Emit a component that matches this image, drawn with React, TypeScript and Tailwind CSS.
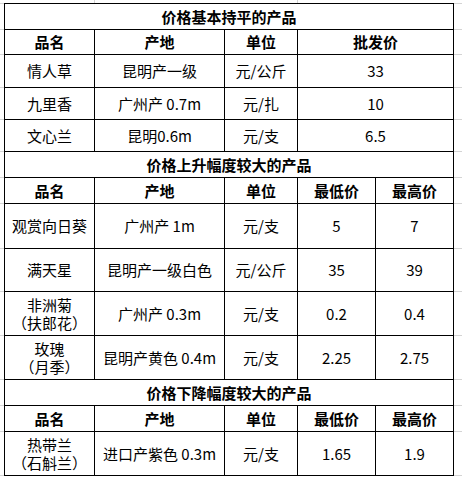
import React from "react";

const LINES = [3, 29, 54, 87, 119, 151, 177, 203, 248, 291, 335, 379, 405, 431, 475];

function Strip({ width }: { width: string }) {
  const segs: number[] = [];
  for (let i = 0; i < LINES.length; i++) {
    const next = i + 1 < LINES.length ? LINES[i + 1] : 479;
    segs.push(next - LINES[i]);
  }
  return (
    <div className={`flex flex-col shrink-0 ${width}`}>
      <div className="h-[3px] shrink-0" />
      {segs.map((h, i) => (
        <div key={i} className="border-t border-[#d4d4d4] shrink-0" style={{ height: h }} />
      ))}
    </div>
  );
}

const C = "bg-white flex items-center justify-center text-center";
const H = "bg-white flex items-center justify-center text-center font-bold";
const T = "bg-white flex items-center justify-center text-center font-bold col-span-5";

export default function App() {
  return (
    <div
      className="w-[462px] h-[479px] overflow-hidden bg-white text-black text-[15px] leading-[18px] flex flex-col"
      style={{ fontFamily: '"Noto Sans CJK SC", "Noto Sans", sans-serif' }}
    >
      <div className="flex flex-1">
        <Strip width="w-[4px]" />
        <div className="flex flex-col shrink-0">
          <div className="h-[3px] flex shrink-0">
            <div className="w-[91px] border-r border-[#d4d4d4]" />
            <div className="w-[203px] border-r border-[#d4d4d4]" />
          </div>
          <div className="grid bg-black p-px gap-px w-[450px] grid-cols-[89px_129px_72px_77px_77px] grid-rows-[25px_24px_32px_31px_31px_25px_25px_44px_42px_43px_43px_25px_25px_43px]">
            <div className={T}>价格基本持平的产品</div>
            <div className={H}>品名</div>
            <div className={H}>产地</div>
            <div className={H}>单位</div>
            <div className={`${H} col-span-2`}>批发价</div>

            <div className={C}>情人草</div>
            <div className={C}>昆明产一级</div>
            <div className={C}>元/公斤</div>
            <div className={`${C} col-span-2`}>33</div>

            <div className={C}>九里香</div>
            <div className={C}>广州产 0.7m</div>
            <div className={C}>元/扎</div>
            <div className={`${C} col-span-2`}>10</div>

            <div className={C}>文心兰</div>
            <div className={C}>昆明0.6m</div>
            <div className={C}>元/支</div>
            <div className={`${C} col-span-2`}>6.5</div>

            <div className={T}>价格上升幅度较大的产品</div>
            <div className={H}>品名</div>
            <div className={H}>产地</div>
            <div className={H}>单位</div>
            <div className={H}>最低价</div>
            <div className={H}>最高价</div>

            <div className={C}>观赏向日葵</div>
            <div className={C}>广州产 1m</div>
            <div className={C}>元/支</div>
            <div className={C}>5</div>
            <div className={C}>7</div>

            <div className={C}>满天星</div>
            <div className={C}>昆明产一级白色</div>
            <div className={C}>元/公斤</div>
            <div className={C}>35</div>
            <div className={C}>39</div>

            <div className={C}>
              非洲菊
              <br />
              （扶郎花）
            </div>
            <div className={C}>广州产 0.3m</div>
            <div className={C}>元/支</div>
            <div className={C}>0.2</div>
            <div className={C}>0.4</div>

            <div className={C}>
              玫瑰
              <br />
              （月季）
            </div>
            <div className={C}>昆明产黄色 0.4m</div>
            <div className={C}>元/支</div>
            <div className={C}>2.25</div>
            <div className={C}>2.75</div>

            <div className={T}>价格下降幅度较大的产品</div>
            <div className={H}>品名</div>
            <div className={H}>产地</div>
            <div className={H}>单位</div>
            <div className={H}>最低价</div>
            <div className={H}>最高价</div>

            <div className={C}>
              热带兰
              <br />
              （石斛兰）
            </div>
            <div className={C}>进口产紫色 0.3m</div>
            <div className={C}>元/支</div>
            <div className={C}>1.65</div>
            <div className={C}>1.9</div>
          </div>
        </div>
        <Strip width="w-[8px]" />
      </div>
    </div>
  );
}
